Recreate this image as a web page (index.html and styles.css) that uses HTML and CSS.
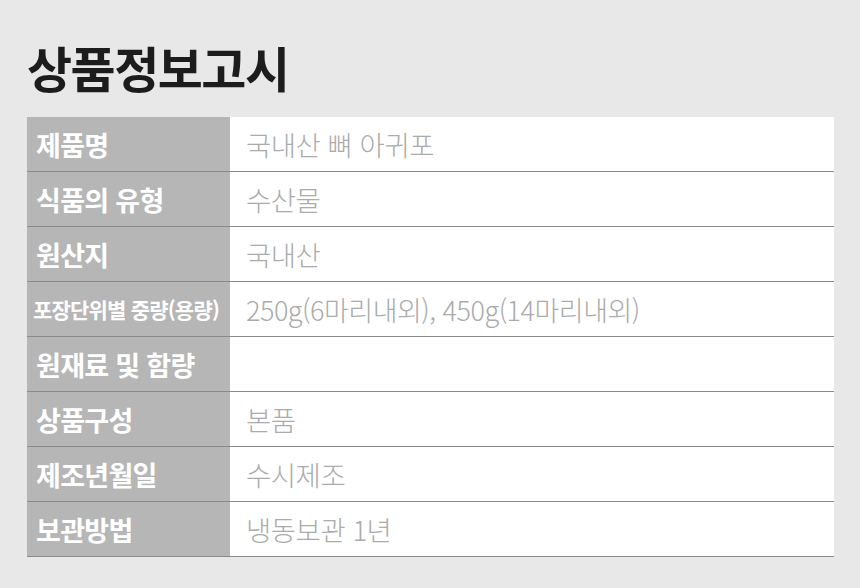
FILE: index.html
```html
<!DOCTYPE html>
<html lang="ko">
<head>
<meta charset="utf-8">
<link rel="stylesheet" href="styles.css">
</head>
<body>
<div class="page">
  <h1 class="title">상품정보고시</h1>
  <div class="table">
    <div class="row"><div class="th">제품명</div><div class="td">국내산 뼈 아귀포</div></div>
    <div class="row"><div class="th">식품의 유형</div><div class="td">수산물</div></div>
    <div class="row"><div class="th">원산지</div><div class="td">국내산</div></div>
    <div class="row"><div class="th small">포장단위별 중량(용량)</div><div class="td num">250g(6마리내외), 450g(14마리내외)</div></div>
    <div class="row"><div class="th">원재료 및 함량</div><div class="td"></div></div>
    <div class="row"><div class="th">상품구성</div><div class="td">본품</div></div>
    <div class="row"><div class="th">제조년월일</div><div class="td">수시제조</div></div>
    <div class="row"><div class="th">보관방법</div><div class="td">냉동보관 1년</div></div>
  </div>
</div>
</body>
</html>
```
FILE: styles.css
```css
html, body {
  margin: 0;
  padding: 0;
  background: #e8e8e8;
}
body {
  font-family: "Noto Sans CJK KR", "Noto Sans", sans-serif;
  width: 860px;
  height: 588px;
  overflow: hidden;
}
.page {
  padding: 33px 26px 0 27px;
}
.title {
  margin: 0 0 16px 0;
  padding-left: 0;
  font-size: 49px;
  line-height: 68px;
  font-weight: 700;
  letter-spacing: -1.5px;
  color: #1c1c1c;
}
.table {
  display: flex;
  flex-direction: column;
  background: #fff;
}
.row {
  display: flex;
  height: 54px;
  border-bottom: 1px solid #8a8a8a;
}
.th {
  width: 203px;
  flex: none;
  background: #b6b6b6;
  color: #fff;
  font-weight: 700;
  font-size: 27px;
  letter-spacing: -0.7px;
  padding-left: 9px;
  box-sizing: border-box;
  display: flex;
  align-items: center;
}
.th.small {
  font-size: 21px;
  letter-spacing: -0.8px;
  padding-left: 6px;
}
.td {
  flex: 1;
  display: flex;
  align-items: center;
  padding-left: 16px;
  color: #ababab;
  font-weight: 300;
  font-size: 27.5px;
  letter-spacing: -0.5px;
}
.td.num {
  font-size: 27px;
  letter-spacing: -0.5px;
}
```
